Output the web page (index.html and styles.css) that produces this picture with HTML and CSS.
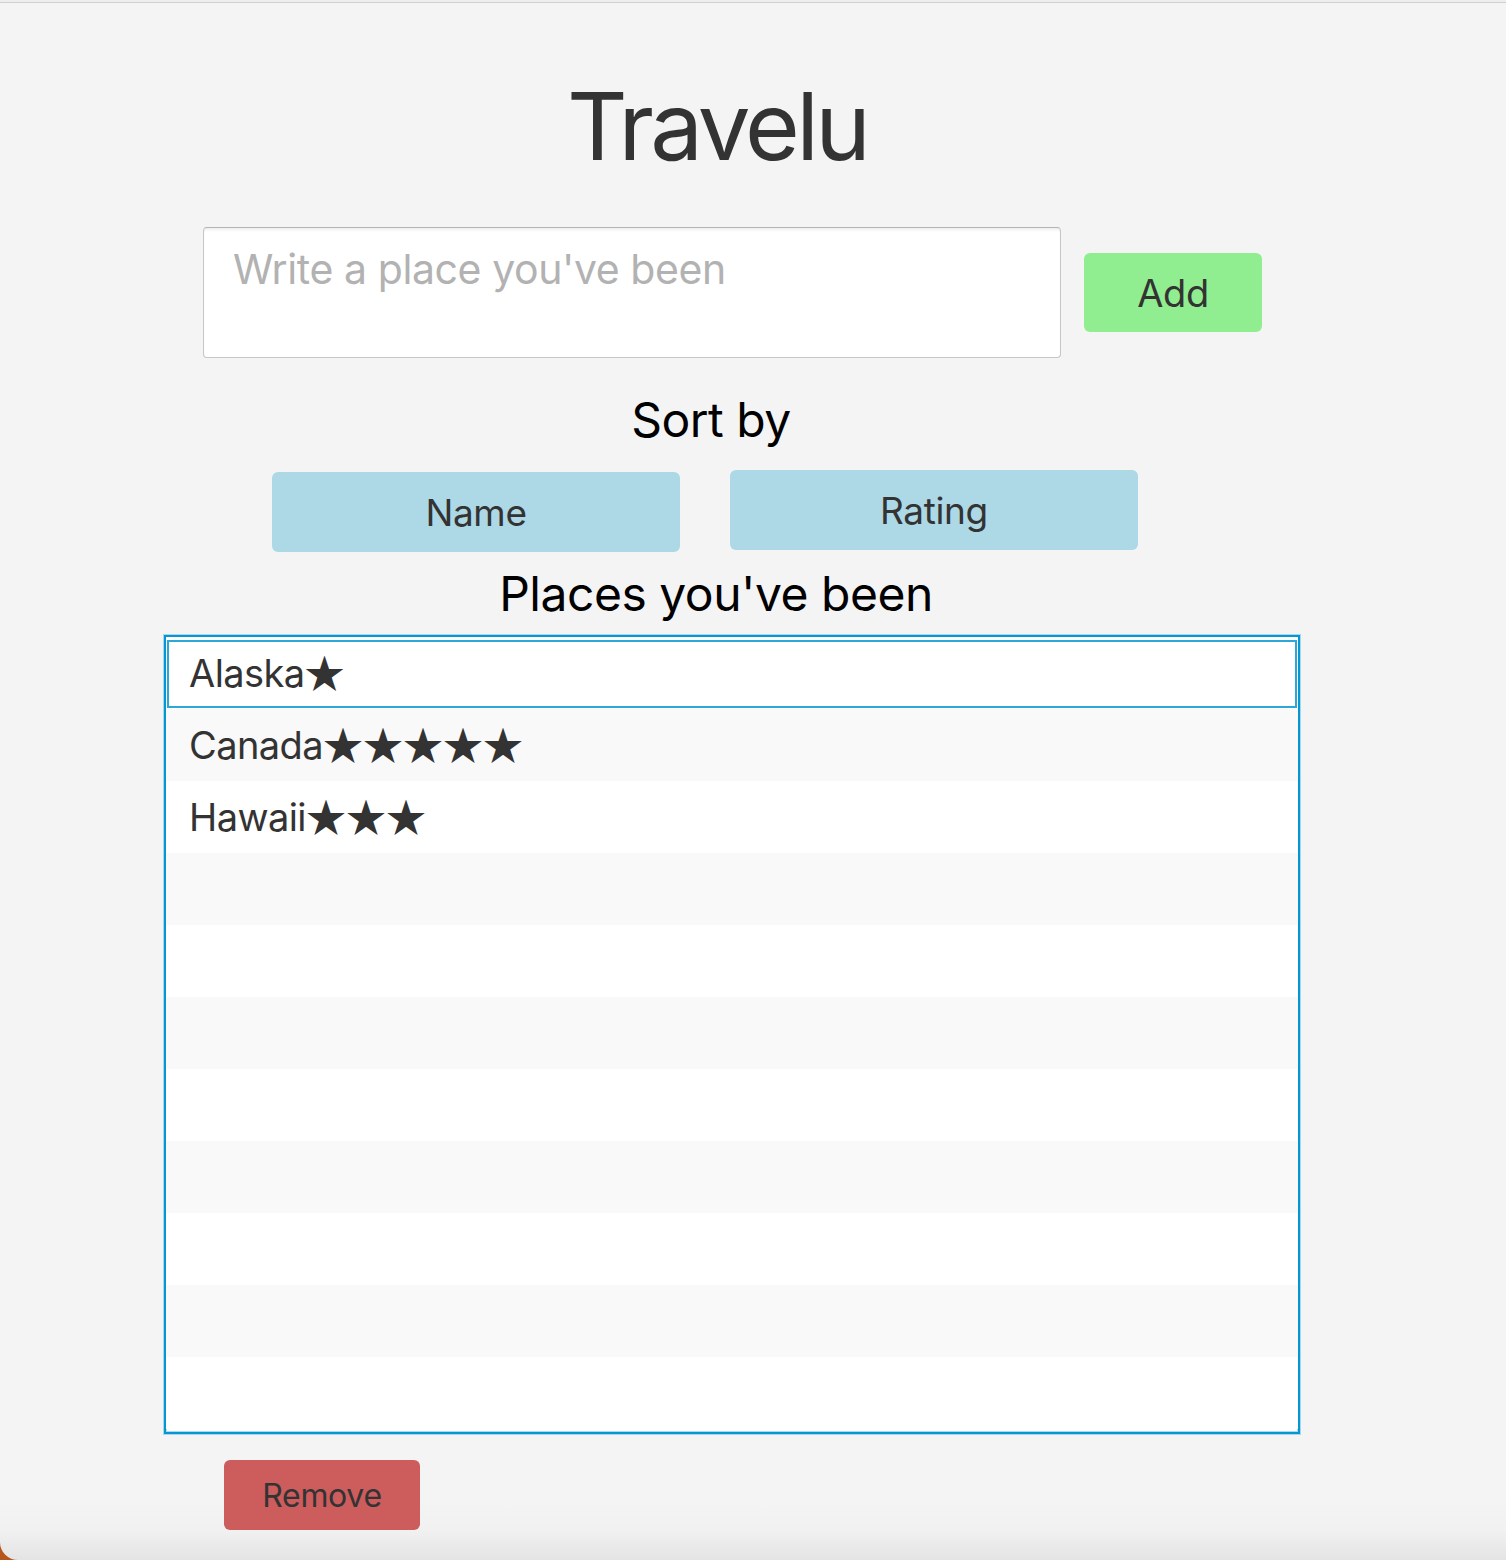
FILE: index.html
```html
<!DOCTYPE html>
<html lang="en">
<head>
<meta charset="utf-8">
<title>Travelu</title>
<link rel="stylesheet" href="styles.css">
</head>
<body>
<div class="window">
  <div class="topline"></div>
  <main class="app">
    <h1 class="title">Travelu</h1>
    <div class="input-row">
      <textarea class="place-input" placeholder="Write a place you've been"></textarea>
      <button class="btn btn-add">Add</button>
    </div>
    <div class="section-label sort-label">Sort by</div>
    <div class="sort-row">
      <button class="btn btn-sort btn-name">Name</button>
      <button class="btn btn-sort btn-rating">Rating</button>
    </div>
    <div class="section-label places-label">Places you've been</div>
    <ul class="place-list">
      <li class="row selected">Alaska<span class="stars">★</span></li>
      <li class="row odd">Canada<span class="stars">★★★★★</span></li>
      <li class="row">Hawaii<span class="stars">★★★</span></li>
      <li class="row odd"></li>
      <li class="row"></li>
      <li class="row odd"></li>
      <li class="row"></li>
      <li class="row odd"></li>
      <li class="row"></li>
      <li class="row odd"></li>
      <li class="row"></li>
    </ul>
    <div class="remove-row">
      <button class="btn btn-remove">Remove</button>
    </div>
  </main>
</div>
</body>
</html>
```

FILE: styles.css
```css
html {
  background: #b5561d;
}

body {
  margin: 0;
  font-family: Inter, "Noto Sans", "Liberation Sans", sans-serif;
}

.window {
  height: 1560px;
  background: linear-gradient(to bottom, #f4f4f4 0, #f4f4f4 1500px, #f1f1f1 1530px, #e4e4e4 1560px);
  border-bottom-left-radius: 18px;
  overflow: hidden;
}

.topline {
  height: 2px;
  background: #eeeeee;
  border-bottom: 1px solid #d0d0d0;
}

.app {
  width: 1434px;
  padding-top: 75px;
}

.title {
  margin: 0;
  font-size: 94px;
  line-height: 96px;
  font-weight: 400;
  color: #333333;
  text-align: center;
  letter-spacing: -0.04em;
}

.input-row {
  margin-top: 53px;
  padding-left: 203px;
  display: flex;
  align-items: center;
  gap: 23px;
}

.place-input {
  width: 858px;
  height: 131px;
  box-sizing: border-box;
  margin: 0;
  padding: 17px 29px;
  border: 1px solid #c6c6c6;
  border-top-color: #b4b4b4;
  border-radius: 4px;
  background: #ffffff;
  box-shadow: inset 0 3px 3px -1px rgba(0, 0, 0, 0.07);
  font-family: inherit;
  font-size: 41px;
  line-height: 48px;
  color: #333333;
  resize: none;
  outline: none;
  letter-spacing: -0.01em;
}

.place-input::placeholder {
  color: #b2b2b2;
}

.btn {
  border: none;
  margin: 0;
  padding: 0;
  font-family: inherit;
  color: #333333;
  border-radius: 6px;
  cursor: pointer;
  letter-spacing: -0.01em;
}

.btn-add {
  width: 178px;
  height: 79px;
  background: #90ee90;
  font-size: 38px;
}

.section-label {
  font-size: 48px;
  line-height: 48px;
  color: #000000;
  text-align: center;
  letter-spacing: -0.01em;
}

.sort-label {
  margin-top: 38px;
  padding-right: 12px;
}

.sort-row {
  margin-top: 26px;
  padding-left: 272px;
  display: flex;
  align-items: flex-start;
  gap: 50px;
}

.btn-sort {
  width: 408px;
  height: 80px;
  background: #add8e6;
  font-size: 37px;
}

.btn-name {
  margin-top: 2px;
}

.places-label {
  margin-top: 18px;
  padding-right: 2px;
}

.place-list {
  list-style: none;
  margin: 17px 0 0 164px;
  padding: 0;
  width: 1136px;
  height: 799px;
  box-sizing: border-box;
  border: 2px solid #0597d2;
  background: #ffffff;
  box-shadow: 0 0 0 1px #a8d6ea, inset 0 0 0 1px rgba(5, 151, 210, 0.35);
  overflow: hidden;
}

.row {
  position: relative;
  height: 72px;
  box-sizing: border-box;
  padding-left: 23px;
  display: flex;
  align-items: center;
  font-size: 38px;
  color: #333333;
  background: #ffffff;
  letter-spacing: -0.015em;
}

.row.odd {
  background: #f9f9f9;
}

.row.selected::after {
  content: "";
  position: absolute;
  top: 3px;
  left: 1px;
  right: 1px;
  bottom: 1px;
  border: 2px solid #2ba8d8;
  pointer-events: none;
}

.stars {
  font-family: "Noto Sans CJK JP", "DejaVu Sans", sans-serif;
  font-size: 40px;
  line-height: 1;
  letter-spacing: 0;
  color: #333333;
  margin-top: -4px;
}

.remove-row {
  margin-top: 26px;
  padding-left: 224px;
}

.btn-remove {
  width: 196px;
  height: 70px;
  background: #cd5c5c;
  font-size: 32px;
}
```
